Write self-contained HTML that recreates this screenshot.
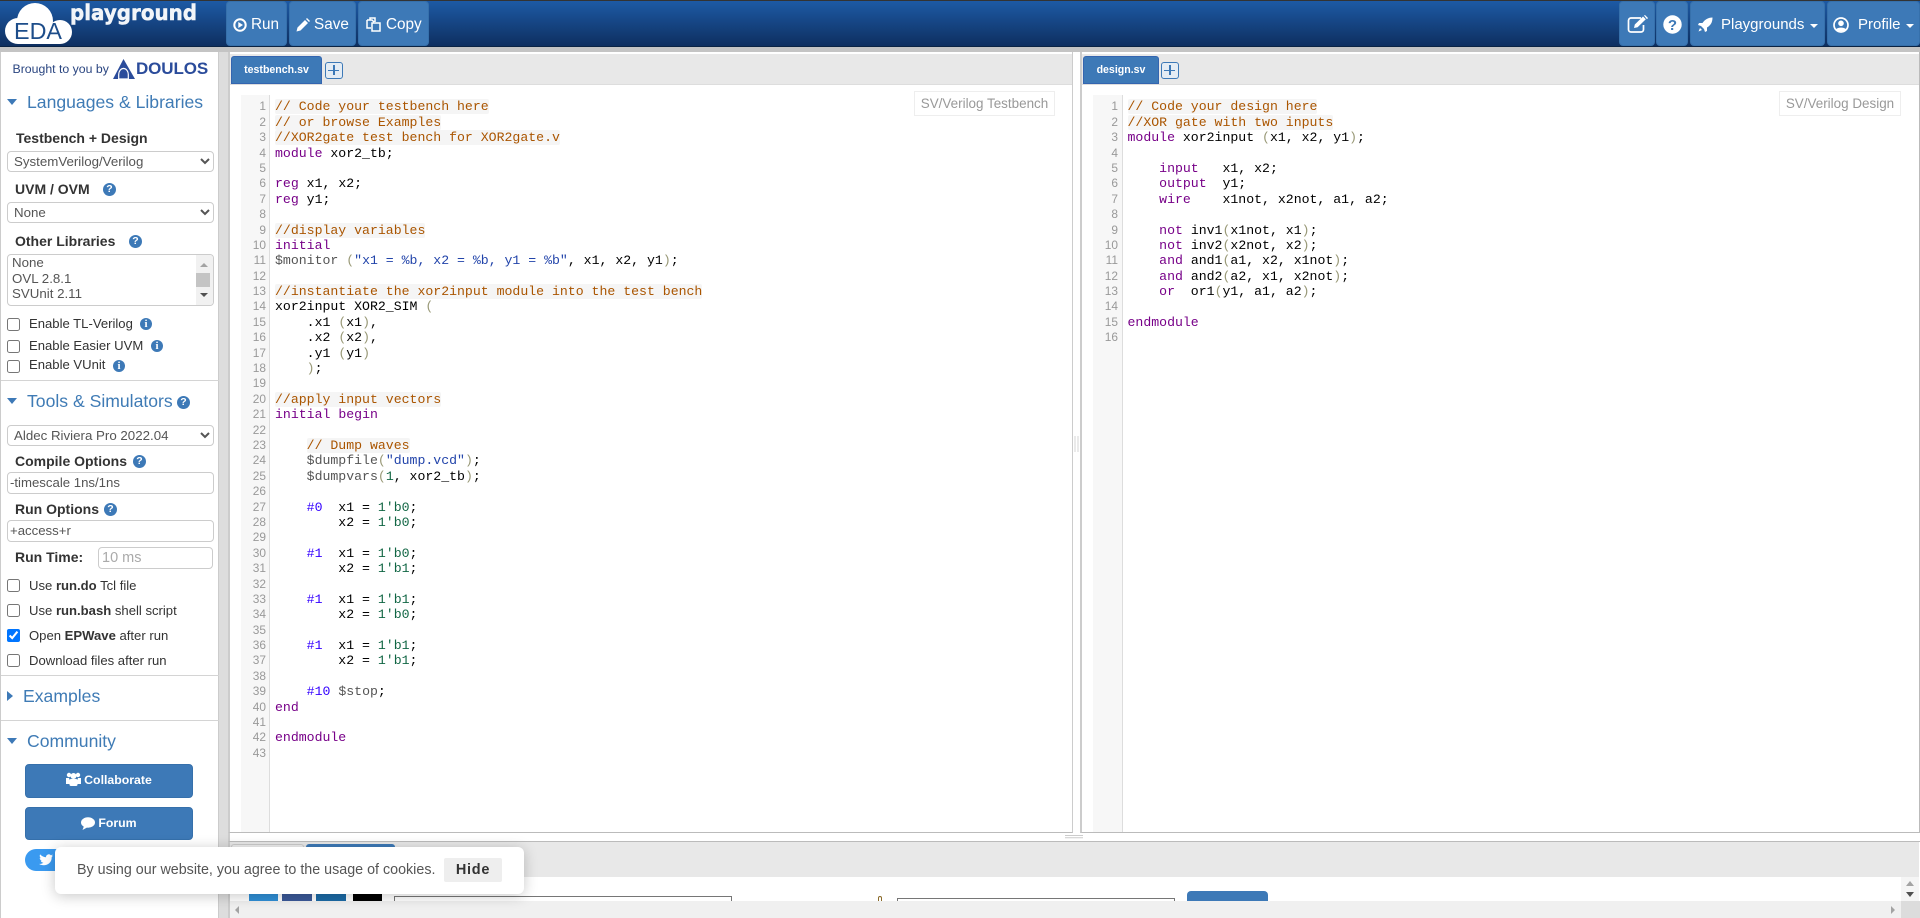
<!DOCTYPE html>
<html lang="en"><head><meta charset="utf-8"><title>EDA Playground</title>
<style>
*{box-sizing:border-box}
html,body{margin:0;padding:0;width:1920px;height:918px;overflow:hidden;background:#ddd;font-family:"Liberation Sans",Arial,sans-serif;color:#333}
.a{position:absolute}
.t{position:absolute;line-height:20px;white-space:nowrap}
.hdr{left:0;top:0;width:1920px;height:47px;border-top:1px solid #333;background:linear-gradient(#1d5aa5,#0e2f60);border-bottom:1px solid #0a2344}
.btn{position:absolute;top:1px;height:45px;background:#3d79b7;border-radius:4px;border:1px solid #3670ab;color:#fff;font-size:15px;line-height:45px;white-space:nowrap}
.btn span{position:absolute;top:0}
.btn svg{position:absolute}
.h{font-size:17.6px;color:#3f7bb5}
.lb{font-weight:bold;font-size:14px;color:#333}
.ck{font-size:13.1px;color:#333}
.q{position:absolute;width:13px;height:13px;border-radius:50%;background:#3d79b7;color:#fff;font-weight:bold;font-size:10.5px;line-height:13px;text-align:center}
.i{font-family:"Liberation Serif",serif;font-size:11px;width:12px;height:12px;line-height:12px}
select{position:absolute;left:7px;width:207px;height:21px;border:1px solid #ccc;border-radius:4px;background:#fff;color:#555;font:13.3px "Liberation Sans",sans-serif;padding:0 0 0 2px;margin:0}
.inp{position:absolute;border:1px solid #ccc;border-radius:4px;background:#fff;color:#555;font-size:13.2px;line-height:20px;padding-left:2px;height:22px;white-space:nowrap}
input[type=checkbox]{position:absolute;left:7px;width:13px;height:13px;margin:0}
.tri{position:absolute;width:0;height:0;border-left:5.5px solid transparent;border-right:5.5px solid transparent;border-top:6px solid #3d79b7}
.hr{position:absolute;left:1px;width:218px;height:1px;background:#d4d4d4}
.sb{position:absolute;left:25px;width:168px;background:#3d79b7;border:1px solid #3670ab;border-radius:4px;color:#fff;font-size:12.3px;font-weight:bold;text-align:center}
.panel{background:#fff;border:1px solid #bbb;border-top:0}
.tabbar{position:absolute;background:#e8e8e8;border-bottom:1px solid #ddd}
.tab{position:absolute;top:56px;height:28px;background:#3d79b7;border:1px solid #3465b0;border-radius:3px 3px 0 0;color:#fff;font-size:10.6px;font-weight:bold;line-height:26px;text-align:center}
.plus{position:absolute;top:62px;width:18px;height:17px;border:1.5px solid #3d79b7;border-radius:3px;background:#e4ecf4}
.plus:before{content:"";position:absolute;left:7px;top:2px;width:1.5px;height:10px;background:#3d79b7}
.plus:after{content:"";position:absolute;left:2px;top:6.5px;width:11px;height:1.5px;background:#3d79b7}
.gut{position:absolute;top:95px;height:737px;background:#f7f7f7;border-right:1px solid #ddd}
.nums{position:absolute;top:99.4px;font:11.9px/15.39px "Liberation Sans",sans-serif;color:#999;text-align:right;margin:0;white-space:pre}
.code{position:absolute;top:99.4px;margin:0;font:13.2px/15.39px "Liberation Mono",monospace;color:#000;white-space:pre}
.c{color:#a50;background:#f5f5f5;border-radius:2px}
.k{color:#708}.b{color:#997}.n{color:#164}.s{color:#24a}.v{color:#555}.d{color:#30f}
.tag{position:absolute;top:91px;height:25px;border:1px solid #eee;color:#999;font-size:13.45px;line-height:23px;text-align:center;white-space:nowrap;background:#fff}
</style></head>
<body>
<div class="a" style="left:0;top:47px;width:1920px;height:5px;background:#c4c4c4"></div>
<div class="a hdr"></div>

<svg class="a" style="left:0;top:0" width="80" height="47" viewBox="0 0 80 47">
<g fill="#fff"><circle cx="35" cy="21" r="18"/><circle cx="18" cy="31" r="13"/><circle cx="60" cy="32" r="12"/><rect x="18" y="26" width="42" height="18"/></g>
<text x="14" y="39" font-family="Liberation Sans" font-size="23" fill="#1d4d8a" textLength="48" lengthAdjust="spacingAndGlyphs">EDA</text>
</svg>
<svg class="a" style="left:70px;top:1px;overflow:visible" width="128" height="26"><text x="0" y="19" font-family="DejaVu Sans" font-weight="bold" font-size="21" fill="#f2f5f9" stroke="#f2f5f9" stroke-width=".5" textLength="127" lengthAdjust="spacingAndGlyphs">playground</text></svg>

<div class="btn" style="left:226px;width:61px;font-size:15.3px"><svg style="left:6px;top:16px" width="14" height="14" viewBox="0 0 14 14"><circle cx="7" cy="7" r="5.7" fill="none" stroke="#fff" stroke-width="2"/><path d="M5.3 4v6l4.7-3z" fill="#fff"/></svg><span style="left:24px">Run</span></div>
<div class="btn" style="left:289px;width:67px;font-size:15.3px"><svg style="left:6px;top:16px" width="14" height="14" viewBox="0 0 14 14"><path d="M0.5 13.500l1-4 7.500-7.500 3 3-7.500 7.500zM10 1l1-1 3 3-1 1z" fill="#fff"/></svg><span style="left:24px">Save</span></div>
<div class="btn" style="left:358px;width:71px;font-size:15.3px"><svg style="left:7px;top:15px" width="16" height="15" viewBox="0 0 16 15"><path d="M1 3h5l2 2M1 3v8h4M6 6h8v8H6zM4 3V1h5v4" fill="none" stroke="#fff" stroke-width="1.5"/></svg><span style="left:27px">Copy</span></div>

<div class="btn" style="left:1619px;width:36px"><svg style="left:7px;top:13px" width="22" height="19" viewBox="0 0 22 19"><path d="M14 3H4a2.500 2.500 0 0 0-2.500 2.500v9A2.500 2.500 0 0 0 4 17h10a2.500 2.500 0 0 0 2.500-2.500V10" fill="none" stroke="#fff" stroke-width="1.7"/><path d="M7 13l.8-3.500L16 1.500l2.800 2.800-8.200 8z M17 .5l1-.5 3 3-1 1.300z" fill="#fff"/></svg></div>
<div class="btn" style="left:1656px;width:32px"><svg style="left:6px;top:13px" width="19" height="19" viewBox="0 0 19 19"><circle cx="9.500" cy="9.500" r="9.200" fill="#fff"/><text x="9.500" y="15" text-anchor="middle" font-family="Liberation Sans" font-weight="bold" font-size="15" fill="#3d79b7">?</text></svg></div>
<div class="btn" style="left:1690px;width:135px"><svg style="left:7px;top:15px" width="15" height="16" viewBox="0 0 15 16"><path d="M14.500.5C10 .5 7 2.500 4.500 6H1L0 8l3 1 3 3 1 3 2-1v-3.500C12.500 8.500 14.500 5.500 14.500.5z" fill="#fff"/><path d="M2 11l-1.500 3.500L4 13z" fill="#fff"/></svg><span style="left:30px">Playgrounds</span><i style="position:absolute;left:119px;top:22px;border-left:4px solid transparent;border-right:4px solid transparent;border-top:4px solid #fff"></i></div>
<div class="btn" style="left:1827px;width:93px"><svg style="left:5px;top:15px" width="16" height="16" viewBox="0 0 16 16"><circle cx="8" cy="8" r="7" fill="none" stroke="#fff" stroke-width="1.700"/><circle cx="8" cy="6.300" r="2.800" fill="#fff"/><path d="M3 12.500c1-2.500 9-2.500 10 0-2 2.500-8 2.500-10 0z" fill="#fff"/></svg><span style="left:30px">Profile</span><i style="position:absolute;left:78px;top:22px;border-left:4px solid transparent;border-right:4px solid transparent;border-top:4px solid #fff"></i></div>

<!-- sidebar -->
<div class="a" style="left:0;top:52px;width:219px;height:866px;background:#fff;border-left:1px solid #ccc;border-right:1px solid #ccc"></div>
<div class="t" style="left:12.500px;top:59px;font-size:12.300px;color:#2a4580">Brought to you by</div>
<svg class="a" style="left:112px;top:58px" width="24" height="22" viewBox="0 0 24 22"><path d="M11.500 1L1 21h5L11.500 9.500 17 21h6z" fill="#2b4c9b"/><path d="M11.500 10.500c-3 0-4.800 3.200-4.800 6V21h9.600v-4.500c0-2.800-1.800-6-4.800-6z" fill="#2b4c9b" stroke="#fff" stroke-width="1.200"/></svg>
<div class="t" style="left:136px;top:59px;font-size:17px;font-weight:bold;color:#2b4c9b;letter-spacing:-.1px">DOULOS</div>

<i class="tri" style="left:7px;top:99px"></i><div class="t h" style="left:27px;top:92px">Languages &amp; Libraries</div>
<div class="t lb" style="left:16px;top:128px">Testbench + Design</div>
<select style="top:151px"><option>SystemVerilog/Verilog</option></select>
<div class="t lb" style="left:15px;top:179px">UVM / OVM</div><div class="q" style="left:103px;top:183px">?</div>
<select style="top:202px"><option>None</option></select>
<div class="t lb" style="left:15px;top:231px">Other Libraries</div><div class="q" style="left:129px;top:235px">?</div>
<div class="a" style="left:7px;top:254px;width:207px;height:52px;border:1px solid #ccc;border-radius:4px;overflow:hidden;background:#fff">
<div class="t" style="left:4px;top:0;font-size:13.300px;color:#555;line-height:15.600px">None<br>OVL 2.8.1<br>SVUnit 2.11</div>
<div class="a" style="right:0;top:0;width:17px;height:52px;background:#f1f1f1"></div>
<div class="a" style="right:3px;top:18px;width:14px;height:14px;background:#c4c4c4"></div>
<i class="a" style="right:5px;top:8px;border-left:4px solid transparent;border-right:4px solid transparent;border-bottom:4px solid #a3a3a3"></i>
<i class="a" style="right:5px;top:38px;border-left:4px solid transparent;border-right:4px solid transparent;border-top:4px solid #505050"></i>
</div>

<input type="checkbox" style="top:318px"><div class="t ck" style="left:29px;top:314px">Enable TL-Verilog</div><div class="q i" style="left:140px;top:318px">i</div>
<input type="checkbox" style="top:340px"><div class="t ck" style="left:29px;top:336px">Enable Easier UVM</div><div class="q i" style="left:151px;top:340px">i</div>
<input type="checkbox" style="top:360px"><div class="t ck" style="left:29px;top:355px">Enable VUnit</div><div class="q i" style="left:113px;top:360px">i</div>
<div class="hr" style="top:380px"></div>
<i class="tri" style="left:7px;top:398px"></i><div class="t h" style="left:27px;top:391px">Tools &amp; Simulators</div><div class="q" style="left:177px;top:396px">?</div>
<select style="top:425px"><option>Aldec Riviera Pro 2022.04</option></select>
<div class="t lb" style="left:15px;top:451px">Compile Options</div><div class="q" style="left:133px;top:455px">?</div>
<div class="inp" style="left:7px;top:472px;width:207px">-timescale 1ns/1ns</div>
<div class="t lb" style="left:15px;top:499px">Run Options</div><div class="q" style="left:104px;top:503px">?</div>
<div class="inp" style="left:7px;top:520px;width:207px">+access+r</div>
<div class="t lb" style="left:15px;top:547px">Run Time:</div>
<div class="inp" style="left:98px;top:547px;width:115px;color:#aaa;font-size:14.500px;padding-left:3px">10 ms</div>
<input type="checkbox" style="top:579px"><div class="t ck" style="left:29px;top:576px">Use <b>run.do</b> Tcl file</div>
<input type="checkbox" style="top:604px"><div class="t ck" style="left:29px;top:601px">Use <b>run.bash</b> shell script</div>
<input type="checkbox" checked style="top:629px"><div class="t ck" style="left:29px;top:626px">Open <b>EPWave</b> after run</div>
<input type="checkbox" style="top:654px"><div class="t ck" style="left:29px;top:651px">Download files after run</div>
<div class="hr" style="top:675px"></div>
<i class="a" style="left:7px;top:691px;border-top:5.500px solid transparent;border-bottom:5.500px solid transparent;border-left:6px solid #3d79b7"></i><div class="t h" style="left:23px;top:686px">Examples</div>
<div class="hr" style="top:720px"></div>
<i class="tri" style="left:7px;top:738px"></i><div class="t h" style="left:27px;top:731px">Community</div>
<div class="sb" style="top:764px;height:34px;line-height:31px"><svg width="15" height="14" viewBox="0 0 15 14" style="vertical-align:-2px;margin-right:3px"><circle cx="3" cy="3" r="2.200" fill="#fff"/><circle cx="12" cy="3" r="2.200" fill="#fff"/><circle cx="7.500" cy="4" r="3" fill="#fff"/><path d="M0 6h3l1 3v3H0zM15 6h-3l-1 3v3h4z" fill="#fff"/><rect x="3.500" y="7" width="8" height="7" rx="1.500" fill="#fff"/></svg>Collaborate</div>
<div class="sb" style="top:807px;height:33px;line-height:30px"><svg width="14" height="13" viewBox="0 0 14 13" style="vertical-align:-3px;margin-right:3px"><ellipse cx="7" cy="5.500" rx="7" ry="5.200" fill="#fff"/><path d="M3 9L1.500 13 7 10z" fill="#fff"/></svg>Forum</div>
<div class="a" style="left:25px;top:849px;width:80px;height:22px;border-radius:11px;background:#3a9af0"><svg style="position:absolute;left:14px;top:5px" width="14" height="12" viewBox="0 0 14 12"><path d="M14 1.500c-.5.300-1 .400-1.600.5.600-.3 1-.9 1.200-1.500-.5.300-1.100.5-1.800.700A2.800 2.800 0 0 0 7 3.300C4.700 3.200 2.600 2.100 1.100.4c-.7 1.300-.4 2.900.9 3.800-.5 0-.9-.1-1.300-.3 0 1.400 1 2.600 2.300 2.800-.4.100-.8.100-1.300 0 .4 1.100 1.400 1.900 2.700 2C3.200 9.600 1.600 10.100 0 9.900 4.800 13 13 10.800 12.700 3c.5-.4.900-.9 1.300-1.500z" fill="#fff"/></svg></div>

<!-- panels -->
<div class="a" style="left:219px;top:52px;width:9px;height:866px;background:#ddd"></div>
<div class="a" style="left:228px;top:50px;width:1692px;height:4px;background:#c4c4c4"></div>
<div class="a panel" style="left:228px;top:52px;width:845px;height:781px;border-left:2px solid #ccc;border-right-color:#ccc"></div>
<div class="a" style="left:1073px;top:52px;width:7px;height:781px;background:#fff"></div>
<svg class="a" style="left:1074px;top:436px" width="5" height="16"><path d="M1 0v16M4 0v16" stroke="#ddd" stroke-width="1.200"/></svg>
<div class="a panel" style="left:1080px;top:52px;width:840px;height:781px;border-left:2px solid #ccc"></div>
<div class="tabbar" style="left:230px;top:54px;width:842px;height:31px"></div>
<div class="tabbar" style="left:1082px;top:54px;width:837px;height:31px"></div>
<div class="tab" style="left:231px;width:91px">testbench.sv</div><div class="plus" style="left:325px"></div>
<div class="tab" style="left:1083px;width:76px">design.sv</div><div class="plus" style="left:1161px"></div>
<div class="tag" style="left:914px;width:141px">SV/Verilog Testbench</div>
<div class="tag" style="left:1779px;width:122px">SV/Verilog Design</div>

<div class="gut" style="left:241px;width:29px"></div>
<pre class="nums" style="left:241px;width:25px">1
2
3
4
5
6
7
8
9
10
11
12
13
14
15
16
17
18
19
20
21
22
23
24
25
26
27
28
29
30
31
32
33
34
35
36
37
38
39
40
41
42
43</pre>
<pre class="code" style="left:275px"><span class="c">// Code your testbench here</span>
<span class="c">// or browse Examples</span>
<span class="c">//XOR2gate test bench for XOR2gate.v</span>
<span class="k">module</span> xor2_tb;

<span class="k">reg</span> x1, x2;
<span class="k">reg</span> y1;

<span class="c">//display variables</span>
<span class="k">initial</span>
<span class="v">$monitor</span> <span class="b">(</span><span class="s">"x1 = %b, x2 = %b, y1 = %b"</span>, x1, x2, y1<span class="b">)</span>;

<span class="c">//instantiate the xor2input module into the test bench</span>
xor2input XOR2_SIM <span class="b">(</span>
    .x1 <span class="b">(</span>x1<span class="b">)</span>,
    .x2 <span class="b">(</span>x2<span class="b">)</span>,
    .y1 <span class="b">(</span>y1<span class="b">)</span>
    <span class="b">)</span>;

<span class="c">//apply input vectors</span>
<span class="k">initial</span> <span class="k">begin</span>

    <span class="c">// Dump waves</span>
    <span class="v">$dumpfile</span><span class="b">(</span><span class="s">"dump.vcd"</span><span class="b">)</span>;
    <span class="v">$dumpvars</span><span class="b">(</span><span class="n">1</span>, xor2_tb<span class="b">)</span>;

    <span class="d">#0</span>  x1 = <span class="n">1'b0</span>;
        x2 = <span class="n">1'b0</span>;

    <span class="d">#1</span>  x1 = <span class="n">1'b0</span>;
        x2 = <span class="n">1'b1</span>;

    <span class="d">#1</span>  x1 = <span class="n">1'b1</span>;
        x2 = <span class="n">1'b0</span>;

    <span class="d">#1</span>  x1 = <span class="n">1'b1</span>;
        x2 = <span class="n">1'b1</span>;

    <span class="d">#10</span> <span class="v">$stop</span>;
<span class="k">end</span>

<span class="k">endmodule</span>
</pre>

<div class="gut" style="left:1093px;width:30px"></div>
<pre class="nums" style="left:1093px;width:25px">1
2
3
4
5
6
7
8
9
10
11
12
13
14
15
16</pre>
<pre class="code" style="left:1127.500px"><span class="c">// Code your design here</span>
<span class="c">//XOR gate with two inputs</span>
<span class="k">module</span> xor2input <span class="b">(</span>x1, x2, y1<span class="b">)</span>;

    <span class="k">input</span>   x1, x2;
    <span class="k">output</span>  y1;
    <span class="k">wire</span>    x1not, x2not, a1, a2;

    <span class="k">not</span> inv1<span class="b">(</span>x1not, x1<span class="b">)</span>;
    <span class="k">not</span> inv2<span class="b">(</span>x2not, x2<span class="b">)</span>;
    <span class="k">and</span> and1<span class="b">(</span>a1, x2, x1not<span class="b">)</span>;
    <span class="k">and</span> and2<span class="b">(</span>a2, x1, x2not<span class="b">)</span>;
    <span class="k">or</span>  or1<span class="b">(</span>y1, a1, a2<span class="b">)</span>;

<span class="k">endmodule</span>
</pre>

<!-- splitter -->
<div class="a" style="left:228px;top:833px;width:1692px;height:8px;background:#fff;border-left:2px solid #ccc"></div>
<svg class="a" style="left:1065px;top:834px" width="18" height="5"><path d="M0 1.500h18M0 3.800h18" stroke="#ccc"/></svg>

<!-- bottom panel -->
<div class="a" style="left:228px;top:841px;width:1692px;height:77px;background:#fff;border-top:1px solid #bbb;border-left:2px solid #ccc"></div>
<div class="a" style="left:230px;top:842px;width:1689px;height:35px;background:#e8e8e8"></div>
<div class="a" style="left:231px;top:844px;width:73px;height:33px;background:#eee;border:1px solid #ccc;border-radius:3px 3px 0 0"></div>
<div class="a" style="left:306px;top:844px;width:89px;height:33px;background:#3d79b7;border-radius:3px 3px 0 0"></div>
<div class="a" style="left:249px;top:891px;width:29px;height:12px;background:#2f8fd6"></div>
<div class="a" style="left:282px;top:891px;width:30px;height:12px;background:#3b5998"></div>
<div class="a" style="left:316px;top:891px;width:30px;height:12px;background:#1b6aa5"></div>
<div class="a" style="left:353px;top:891px;width:29px;height:12px;background:#000"></div>
<div class="a" style="left:394px;top:896px;width:338px;height:10px;border:1px solid #767676;background:#fff"></div>
<div class="a" style="left:897px;top:898px;width:278px;height:10px;border:1px solid #767676;background:#fff"></div>
<div class="a" style="left:1187px;top:891px;width:81px;height:14px;background:#3d79b7;border-radius:4px 4px 0 0"></div>
<div class="a" style="left:878px;top:896px;width:4px;height:6px;border:1px solid #8a6a2a;border-bottom:0;border-radius:2px 2px 0 0"></div>
<div class="a" style="left:230px;top:901px;width:1671px;height:17px;background:#f0f0f0"></div>
<div class="a" style="left:1901px;top:877px;width:18px;height:24px;background:#f5f5f5"></div>
<div class="a" style="left:1901px;top:901px;width:19px;height:17px;background:#dcdcdc"></div>
<i class="a" style="left:1906px;top:881px;border-left:4px solid transparent;border-right:4px solid transparent;border-bottom:5px solid #a3a3a3"></i>
<i class="a" style="left:1906px;top:892px;border-left:4px solid transparent;border-right:4px solid transparent;border-top:5px solid #505050"></i>
<i class="a" style="left:235px;top:906px;border-top:4px solid transparent;border-bottom:4px solid transparent;border-right:4px solid #a3a3a3"></i>
<i class="a" style="left:1891px;top:906px;border-top:4px solid transparent;border-bottom:4px solid transparent;border-left:4px solid #a3a3a3"></i>

<!-- cookie -->
<div class="a" style="left:55px;top:847px;width:469px;height:47px;background:#fff;border-radius:6px;box-shadow:0 2px 14px rgba(0,0,0,.22)"></div>
<div class="t" style="left:77px;top:860px;font-size:14.300px;color:#555">By using our website, you agree to the usage of cookies.</div>
<div class="a" style="left:444px;top:858px;width:58px;height:24px;background:#eee;border-radius:2px;color:#333;font-size:14.500px;font-weight:bold;line-height:25px;text-align:center;letter-spacing:.7px">Hide</div>
</body></html>
